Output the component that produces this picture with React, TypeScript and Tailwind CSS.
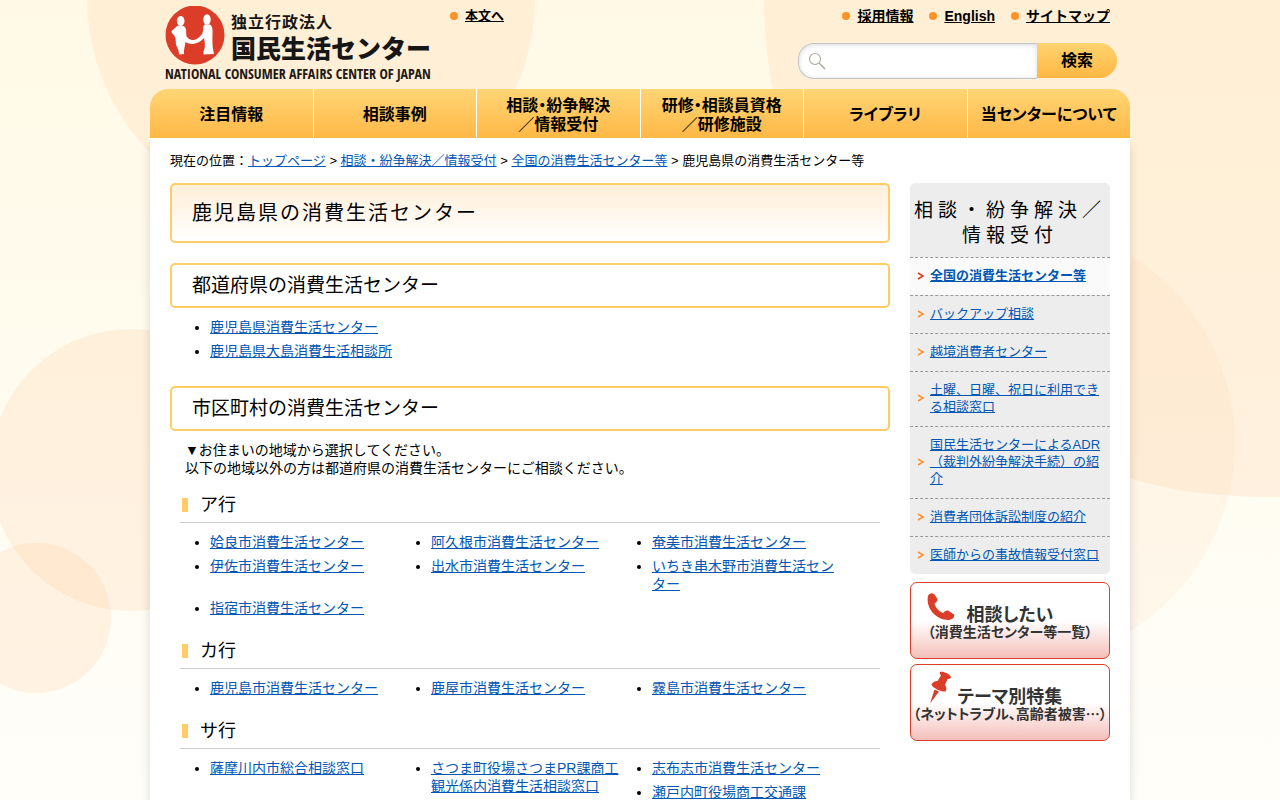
import React from "react";

const navItems = [
  ["注目情報"],
  ["相談事例"],
  ["相談・紛争解決", "／情報受付"],
  ["研修・相談員資格", "／研修施設"],
  ["ライブラリ"],
  ["当センターについて"],
];

const sideItems = [
  "バックアップ相談",
  "越境消費者センター",
  "土曜、日曜、祝日に利用できる相談窓口",
  "国民生活センターによるADR（裁判外紛争解決手続）の紹介",
  "消費者団体訴訟制度の紹介",
  "医師からの事故情報受付窓口",
];

// one inner array per grid cell
const areas = [
  {
    title: "ア行",
    cells: [
      ["姶良市消費生活センター"],
      ["阿久根市消費生活センター"],
      ["奄美市消費生活センター"],
      ["伊佐市消費生活センター"],
      ["出水市消費生活センター"],
      ["いちき串木野市消費生活センター"],
      ["指宿市消費生活センター"],
    ],
  },
  {
    title: "カ行",
    cells: [
      ["鹿児島市消費生活センター"],
      ["鹿屋市消費生活センター"],
      ["霧島市消費生活センター"],
    ],
  },
  {
    title: "サ行",
    cells: [
      ["薩摩川内市総合相談窓口"],
      ["さつま町役場さつまPR課商工観光係内消費生活相談窓口"],
      ["志布志市消費生活センター", "瀬戸内町役場商工交通課"],
    ],
  },
];

function TextLink({ children }: { children: React.ReactNode }) {
  return (
    <a href="#" className="text-[#0057b3] underline">
      {children}
    </a>
  );
}

function TopLink({ children }: { children: React.ReactNode }) {
  return (
    <li className="flex items-center">
      <span className="w-2 h-2 mr-[7px] rounded-full bg-[#ff9226]" />
      <a href="#" className="font-bold underline">
        {children}
      </a>
    </li>
  );
}

function Background() {
  return (
    <svg className="absolute left-0 top-0 w-full h-[800px] -z-10" aria-hidden="true">
      <g fill="#ffbe82" fillOpacity="0.17">
        <circle cx="311" cy="-3" r="224" />
        <circle cx="131" cy="470" r="141" />
        <circle cx="36" cy="618" r="75" />
        <circle cx="1264" cy="-3" r="500" />
        <circle cx="1014" cy="443" r="221" fillOpacity="0.09" />
      </g>
    </svg>
  );
}

function Logo() {
  return (
    <a href="#" className="block w-[270px]">
      <span className="flex">
        <svg width="60" height="60" viewBox="0 0 60 60" aria-hidden="true">
          <circle cx="30" cy="29" r="29.5" fill="#dc3d29" />
          <g fill="#fff">
            <ellipse cx="15.700" cy="15" rx="3.800" ry="5" />
            <ellipse cx="42" cy="13.500" rx="3.700" ry="5.300" />
            <path d="M12 20 C10 22.500 6.500 24 6.500 26 C7 28 9.500 29 10 31 C11.500 34 10 37 12 41 C13 43 14 45 14 48.500 L19 48 C18.500 44 20 40 20.500 36 C25 39 33 39 39 32 C40 37 40.500 42 38.500 45.500 L38.500 48.500 L49 48 L48.500 45.500 C47 40 47.500 33 47.500 28 C48 23 47 19 44.500 18.500 L39.500 18.500 C37.500 21 38.500 25 37.500 27 C33 35 25.500 36 22 31 C20.500 29 22 25 20.500 22 C19 19 15 18.500 12 20 Z" />
          </g>
        </svg>
        <span className="ml-[6px] pt-[6px] font-['Noto_Sans_CJK_JP',sans-serif] text-[#161616]">
          <span className="block text-[16px] leading-[19px] font-bold tracking-[1px]">独立行政法人</span>
          <span className="block text-[25px] leading-[32px] font-black whitespace-nowrap">国民生活センター</span>
        </span>
      </span>
      <span className="block text-[14px] leading-[15px] font-bold whitespace-nowrap text-[#231815] font-['Liberation_Sans_Narrow','Open_Sans_Condensed','Liberation_Sans',sans-serif]">
        NATIONAL CONSUMER AFFAIRS CENTER OF JAPAN
      </span>
    </a>
  );
}

function Header() {
  return (
    <header className="flex h-[89px] pl-[15px] pr-[13px] pt-[6px]">
      <Logo />
      <ul className="ml-[15px] text-[13px] leading-5">
        <TopLink>本文へ</TopLink>
      </ul>
      <div className="ml-auto flex flex-col items-end">
        <ul className="flex gap-4 mr-[7px] text-[14px] leading-5">
          <TopLink>採用情報</TopLink>
          <TopLink>English</TopLink>
          <TopLink>サイトマップ</TopLink>
        </ul>
        <form className="relative flex mt-[17px]" onSubmit={(e) => e.preventDefault()}>
          <svg className="absolute left-[10px] top-[9px]" width="18" height="18" viewBox="0 0 18 18" fill="none" stroke="#b0aca0" aria-hidden="true">
            <circle cx="7" cy="7" r="5.500" strokeWidth="1.200" />
            <path d="M11 11 L17 17" strokeWidth="1.600" />
          </svg>
          <input
            type="text"
            aria-label="サイト内検索"
            className="w-[239px] h-9 pl-9 rounded-l-[16px] border border-r-0 border-[#c4c4c8] bg-white shadow-[inset_0_1px_5px_rgba(0,0,0,0.15)]"
          />
          <button
            type="submit"
            className="w-20 h-[35px] rounded-r-[18px] bg-linear-to-b from-[#ffd36f] to-[#ffb742] text-[16px] leading-6 pb-[3px] font-bold font-['Noto_Sans_CJK_JP',sans-serif]"
          >
            検索
          </button>
        </form>
      </div>
    </header>
  );
}

function Nav() {
  return (
    <nav className="rounded-t-[18px] overflow-hidden">
      <ul className="grid grid-cols-6 gap-px bg-white">
        {navItems.map((lines) => (
          <li key={lines[0]}>
            <a
              href="#"
              className="flex flex-col items-center justify-center h-[49px] whitespace-nowrap bg-linear-to-b from-[#ffd574] to-[#ffb845] text-[16px] leading-[19px] font-bold font-['Noto_Sans_CJK_JP',sans-serif] [font-feature-settings:'palt']"
            >
              {lines.map((line) => (
                <span key={line}>{line}</span>
              ))}
            </a>
          </li>
        ))}
      </ul>
    </nav>
  );
}

function SideLink({ label, current }: { label: string; current?: boolean }) {
  return (
    <li
      className={
        current
          ? "flex items-center border-t border-dashed border-[#999] pt-[9px] pb-[11px] pl-[7px] pr-1 bg-[#fafafa] text-[#d93a25] font-bold"
          : "flex items-center border-t border-dashed border-[#999] pt-[9px] pb-[11px] pl-[7px] pr-1 text-[#ff9226]"
      }
    >
      <svg className="shrink-0 mr-[5px]" width="8" height="8" viewBox="0 0 8 8" fill="none" stroke="currentColor" strokeWidth="1.500" aria-hidden="true">
        <path d="M1 1 L6 4 L1 7" />
      </svg>
      <TextLink>{label}</TextLink>
    </li>
  );
}

function Banner({ title, sub, icon }: { title: string; sub: string; icon: React.ReactNode }) {
  return (
    <a
      href="#"
      className="relative flex flex-col items-center h-[77px] pt-5 rounded-[7px] border border-[#dc3d29] bg-linear-to-b from-white from-50% to-[#f3bfba] text-[#333] font-bold whitespace-nowrap font-['Noto_Sans_CJK_JP',sans-serif] [font-feature-settings:'palt']"
    >
      {icon}
      <span className="text-[18px] leading-5">{title}</span>
      <span className="text-[14px] leading-4">{sub}</span>
    </a>
  );
}

function Sidebar() {
  return (
    <aside className="w-[200px] shrink-0">
      <div className="rounded-[5px] overflow-hidden bg-[#ededed]">
        <h2 className="pt-[15px] pb-[9px] text-center text-[19px] leading-[25px] tracking-[5px]">
          相談・紛争解決／
          <br />
          情報受付
        </h2>
        <ul className="text-[13px] leading-[17px]">
          <SideLink label="全国の消費生活センター等" current />
          {sideItems.map((label) => (
            <SideLink key={label} label={label} />
          ))}
        </ul>
      </div>
      <div className="mt-2 grid gap-[5px]">
        <Banner
          title="相談したい"
          sub="（消費生活センター等一覧）"
          icon={
            <svg className="absolute left-4 top-[10px]" width="28" height="28" viewBox="0 0 28 28" fill="#dc3d29" aria-hidden="true">
              <path d="M1 3 C2 0.500 5 -0.500 7 1 L10.500 6 C10.500 8 9 9.500 7.500 10.500 C8 14 12 18.500 16 20 C17.500 18.500 19 17 21 17.500 L27 21.500 C28 24 25.500 26.500 22 27 C9 27.500 -1.500 15 1 3 Z" />
            </svg>
          }
        />
        <Banner
          title="テーマ別特集"
          sub="（ネットトラブル、高齢者被害…）"
          icon={
            <svg className="absolute left-[18px] top-[6px]" width="24" height="33" viewBox="0 0 24 33" fill="#dc3d29" aria-hidden="true">
              <path d="M11 1 C14 0 21 3 22 6 C21.500 8 19.500 8 18.500 8 L16 14 C17.500 16 18 18.500 16.500 20.500 C12.500 21 4 17.500 2.500 13.500 C3.500 11 6 10 8.500 10 L12 4.500 C11 3.500 10.500 2.500 11 1 Z" />
              <path d="M5.500 18.500 L10 20.500 L1 32.500 Z" />
            </svg>
          }
        />
      </div>
    </aside>
  );
}

function SectionTitle({ children }: { children: React.ReactNode }) {
  return (
    <h2 className="h-[45px] flex items-center px-5 rounded-[5px] border-2 border-[#ffcc66] text-[19px] leading-6">
      {children}
    </h2>
  );
}

export default function App() {
  return (
    <div
      lang="ja"
      className="relative isolate min-h-screen overflow-hidden bg-linear-to-b from-[#fff9e6] to-[#fffef9] text-black font-['Liberation_Sans','Noto_Sans_CJK_JP',sans-serif]"
    >
      <Background />
      <div className="w-full max-w-[980px] mx-auto">
        <Header />
        <Nav />
        <div className="px-5 pt-[14px] bg-white shadow-[0_8px_10px_rgba(0,0,0,0.15)]">
          {/* breadcrumb */}
          <p className="text-[13px] leading-[17px]">
            現在の位置：<TextLink>トップページ</TextLink> &gt; <TextLink>相談・紛争解決／情報受付</TextLink> &gt;{" "}
            <TextLink>全国の消費生活センター等</TextLink> &gt; 鹿児島県の消費生活センター等
          </p>

          <div className="flex gap-5 mt-[14px]">
            <main className="flex-1 text-[14px] leading-[18px]">
              <h1 className="h-[60px] flex items-center px-5 mb-5 rounded-[5px] border-2 border-[#ffcc66] bg-linear-to-b from-[#ffefd9] to-white text-[20px] leading-6 tracking-[2px]">
                鹿児島県の消費生活センター
              </h1>

              <SectionTitle>都道府県の消費生活センター</SectionTitle>
              <ul className="list-disc pl-10 mt-[10px] mb-[26px]">
                <li className="mb-[6px]">
                  <TextLink>鹿児島県消費生活センター</TextLink>
                </li>
                <li>
                  <TextLink>鹿児島県大島消費生活相談所</TextLink>
                </li>
              </ul>

              <SectionTitle>市区町村の消費生活センター</SectionTitle>
              <p className="mt-[10px] px-[15px]">
                ▼お住まいの地域から選択してください。
                <br />
                以下の地域以外の方は都道府県の消費生活センターにご相談ください。
              </p>

              {areas.map((area) => (
                <section key={area.title} className="mx-[10px] pt-4">
                  <h3 className="flex items-center pl-[2px] pb-[5px] mb-[10px] border-b border-[#ccc] text-[18px] leading-6">
                    <span className="w-[6px] h-[14px] mr-3 bg-[#ffcc66]" />
                    {area.title}
                  </h3>
                  <div className="grid grid-cols-3 gap-x-7 pl-[30px] pr-[35px]">
                    {area.cells.map((cell) => (
                      <ul key={cell[0]} className="list-disc">
                        {cell.map((name) => (
                          <li key={name} className="mb-[6px]">
                            <TextLink>{name}</TextLink>
                          </li>
                        ))}
                      </ul>
                    ))}
                  </div>
                </section>
              ))}
            </main>
            <Sidebar />
          </div>
        </div>
      </div>
    </div>
  );
}
